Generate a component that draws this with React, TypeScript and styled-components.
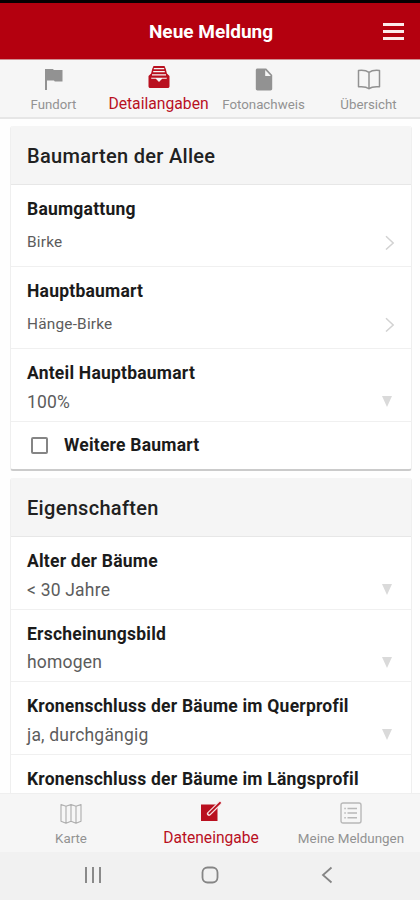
import React from "react";
import styled, { createGlobalStyle } from "styled-components";

const Global = createGlobalStyle`
  * { box-sizing: border-box; }
  body { margin: 0; background: #fefefe; font-family: Roboto, "Liberation Sans", sans-serif; }
`;

const Screen = styled.div`
  width: 420px;
  height: 900px;
  overflow: hidden;
  display: flex;
  flex-direction: column;
  background: #fefefe;
`;

const AppBar = styled.header`
  flex: none;
  height: 60px;
  border-top: 3px solid #080002;
  border-bottom: 1px solid #cf8f92;
  background: #b4000f;
  display: grid;
  grid-template-columns: 1fr auto 1fr;
  align-items: center;
  padding: 1px 16px 0 18px;
`;

const AppTitle = styled.h1`
  margin: 0;
  color: #fff;
  font-size: 19px;
  line-height: 24px;
  font-weight: 700;
`;

const MenuButton = styled.button`
  justify-self: end;
  border: 0;
  padding: 0;
  background: none;
  display: flex;
  flex-direction: column;
  gap: 4px;
`;

const MenuLine = styled.span`
  width: 21px;
  height: 3px;
  background: #fce9ea;
`;

const TabBar = styled.nav`
  flex: none;
  height: 59px;
  display: grid;
  grid-template-columns: repeat(4, 105px);
  padding-left: 1px;
  background: #f6f6f6;
  border-bottom: 2px solid #e6e6e6;
`;

const BottomBar = styled.nav`
  flex: none;
  height: 59px;
  display: grid;
  grid-template-columns: repeat(3, 140px);
  padding-left: 1px;
  background: #f6f6f6;
  border-top: 1px solid #efefef;
`;

const Tab = styled.div<{ $active?: boolean; $top: number }>`
  display: flex;
  flex-direction: column;
  align-items: center;
  padding-top: ${(p) => p.$top}px;
  color: ${(p) => (p.$active ? "#b9101f" : "#929292")};
  svg { display: block; flex: none; }
`;

const TabLabel = styled.span<{ $size: number; $gap: number }>`
  margin-top: ${(p) => p.$gap}px;
  font-size: ${(p) => p.$size}px;
  line-height: 18px;
  white-space: nowrap;
`;

const Content = styled.main`
  flex: 1;
  min-height: 0;
  overflow: hidden;
  display: flex;
  flex-direction: column;
  gap: 7px;
  padding: 7px 8px 0 10px;
`;

const Card = styled.section<{ $open?: boolean }>`
  flex: none;
  border-radius: 3px;
  border-left: 1px solid #efefef;
  border-right: 1px solid #efefef;
  border-bottom: ${(p) => (p.$open ? "0" : "2px solid #cbcbcb")};
  background: #fff;
  overflow: hidden;
`;

const CardHeader = styled.h2`
  margin: 0;
  height: 59px;
  display: flex;
  align-items: center;
  padding: 1px 16px 0;
  background: #f5f5f5;
  border-bottom: 1px solid #e7e7e7;
  color: #212121;
  font-size: 20px;
  font-weight: 500;
  letter-spacing: 0.3px;
`;

const Row = styled.div<{ $height: number }>`
  height: ${(p) => p.$height}px;
  border-bottom: 1px solid #f0f0f0;
  padding: 13px 16px 0;
  &:last-child { border-bottom: 0; }
`;

const RowTitle = styled.div`
  font-size: 17.5px;
  line-height: 22px;
  font-weight: 700;
  letter-spacing: 0.22px;
  color: #1b1b1b;
  white-space: nowrap;
`;

const ValueLine = styled.div<{ $link?: boolean }>`
  display: flex;
  align-items: center;
  justify-content: space-between;
  margin-top: ${(p) => (p.$link ? 11 : 6.5)}px;
  height: 22px;
  font-size: ${(p) => (p.$link ? 15.4 : 17.5)}px;
  letter-spacing: 0.2px;
  color: #5c5c5c;
`;

const CheckRow = styled.label`
  height: 47px;
  display: flex;
  align-items: center;
  gap: 16px;
  padding: 0 20px 1px;
`;

const CheckBox = styled.span`
  width: 17px;
  height: 17px;
  border: 2px solid #858585;
  border-radius: 2px;
`;

const SystemBar = styled.footer`
  flex: none;
  height: 48px;
  background: #f1f1f1;
  display: grid;
  grid-template-columns: 117px 117px 118px;
  justify-content: center;
  justify-items: center;
  align-items: center;
  padding: 0 0 2px;
`;

const Arrow = styled.svg`
  margin-right: 3px;
`;

const ChevronIcon = () => (
  <svg width="10" height="15" viewBox="0 0 10 15" fill="none" stroke="#d2d2d2" strokeWidth="1.5">
    <path d="M1 1.2 8.2 8 1 14.5" />
  </svg>
);

const ArrowIcon = () => (
  <Arrow width="10" height="11" viewBox="0 0 10 11">
    <path fill="#dadada" d="M0 0h10L5 11z" />
  </Arrow>
);

const FlagIcon = () => (
  <svg width="20" height="22" viewBox="0 0 20 22" fill="currentColor">
    <path d="M1 1h8l.8 1h8.700v11.500h-7.700l-.8-1H3V22H1z" />
  </svg>
);

const TrayIcon = () => (
  <svg width="24" height="24" viewBox="0 0 24 24">
    <path fill="currentColor" d="M6.500 1h11l1.300 3 1.100 4.500 2.600 2.500v10.200c0 1-.7 1.800-1.800 1.800H3.300c-1 0-1.800-.8-1.800-1.800V11l2.600-2.500L5.200 4z" />
    <path stroke="#f6f6f6" strokeWidth="1.300" fill="none" d="M6.800 3.600h10.400M6.200 6.700h11.600M5 9.800h14" />
    <path fill="#f6f6f6" d="M4 12.800h16l-.4 1h-4.400L12 17l-3.200-3.200H4.400z" />
  </svg>
);

const FileIcon = () => (
  <svg width="18" height="23" viewBox="0 0 18 23">
    <path fill="currentColor" d="M2.500.5h8.700l6 6.400v13.900c0 1-.7 1.700-1.700 1.700h-13c-1 0-1.700-.7-1.700-1.700V2.200C.8 1.200 1.500.5 2.500.5z" />
    <path fill="#f6f6f6" d="M10.200 2v6h5.700z" />
  </svg>
);

const BookIcon = () => (
  <svg width="24" height="21" viewBox="0 0 24 21" fill="none" stroke="currentColor" strokeWidth="1.500" strokeLinejoin="round">
    <path d="M12 3.300C9.500 1.500 5.500 1.100 1.500 1.500v16.300c4-.4 8-.1 10.500 2 2.500-2.100 6.500-2.400 10.500-2V1.500C18.500 1.100 14.500 1.500 12 3.300zM12 3.300v16.300" />
  </svg>
);

const MapIcon = () => (
  <svg width="22" height="21" viewBox="0 0 22 21" fill="none" stroke="#adadad" strokeWidth="1.100" strokeLinejoin="round">
    <path d="m1 1.500 5 1.700 5-1.700 5 1.700 5-1.700v16.700l-5 2-5-2-5 2-5-2zM6 3.200v17M11 1.500v16.700M16 3.200v17" />
  </svg>
);

const EditIcon = () => (
  <svg width="22" height="21" viewBox="0 0 22 21">
    <path fill="currentColor" d="M1 3.500h16.500V20H1z" />
    <path stroke="#f6e3e4" strokeWidth="4.200" strokeLinecap="round" d="M9 12.700 19.700 2.200" />
    <path stroke="currentColor" strokeWidth="1.900" strokeLinecap="round" d="M9.300 12.400 20 1.800" />
  </svg>
);

const ListIcon = () => (
  <svg width="22" height="22" viewBox="0 0 22 22" fill="none" stroke="#b8b8b8" strokeWidth="1.400">
    <rect x="1" y="1" width="20" height="20" rx="2" />
    <path d="M7.500 6.500h9.500M7.500 11h9.500M7.500 15.700h9.500M4.300 6.500h1.500M4.300 11h1.500M4.300 15.700h1.500" />
  </svg>
);

interface FieldProps {
  title: string;
  value?: string;
  height: number;
  link?: boolean;
}

const Field = ({ title, value, height, link }: FieldProps) => (
  <Row $height={height}>
    <RowTitle>{title}</RowTitle>
    {value && (
      <ValueLine $link={link}>
        <span>{value}</span>
        {link ? <ChevronIcon /> : <ArrowIcon />}
      </ValueLine>
    )}
  </Row>
);

export default function App() {
  return (
    <Screen>
      <Global />
      <AppBar>
        <span />
        <AppTitle>Neue Meldung</AppTitle>
        <MenuButton aria-label="Menü"><MenuLine /><MenuLine /><MenuLine /></MenuButton>
      </AppBar>
      <TabBar>
        <Tab $top={8}><FlagIcon /><TabLabel $size={13.2} $gap={6}>Fundort</TabLabel></Tab>
        <Tab $top={5} $active><TrayIcon /><TabLabel $size={15.7} $gap={6}>Detailangaben</TabLabel></Tab>
        <Tab $top={8}><FileIcon /><TabLabel $size={13.3} $gap={5}>Fotonachweis</TabLabel></Tab>
        <Tab $top={9}><BookIcon /><TabLabel $size={13.3} $gap={6}>Übersicht</TabLabel></Tab>
      </TabBar>
      <Content>
        <Card>
          <CardHeader>Baumarten der Allee</CardHeader>
          <Field title="Baumgattung" value="Birke" height={82} link />
          <Field title="Hauptbaumart" value="Hänge-Birke" height={82} link />
          <Field title="Anteil Hauptbaumart" value="100%" height={73} />
          <CheckRow><CheckBox /><RowTitle>Weitere Baumart</RowTitle></CheckRow>
        </Card>
        <Card $open>
          <CardHeader>Eigenschaften</CardHeader>
          <Field title="Alter der Bäume" value="< 30 Jahre" height={72.6} />
          <Field title="Erscheinungsbild" value="homogen" height={72.6} />
          <Field title="Kronenschluss der Bäume im Querprofil" value="ja, durchgängig" height={72.6} />
          <Field title="Kronenschluss der Bäume im Längsprofil" height={72.6} />
        </Card>
      </Content>
      <BottomBar>
        <Tab $top={9}><MapIcon /><TabLabel $size={13.3} $gap={6}>Karte</TabLabel></Tab>
        <Tab $top={7} $active><EditIcon /><TabLabel $size={15.6} $gap={7}>Dateneingabe</TabLabel></Tab>
        <Tab $top={8}><ListIcon /><TabLabel $size={13.4} $gap={6}>Meine Meldungen</TabLabel></Tab>
      </BottomBar>
      <SystemBar>
        <svg width="18" height="18" viewBox="0 0 18 18" stroke="#8a8a8a" strokeWidth="2"><path d="M2 1v16M9 1v16M16 1v16" /></svg>
        <svg width="18" height="18" viewBox="0 0 18 18" fill="none" stroke="#858585" strokeWidth="1.8"><rect x="1.5" y="1.5" width="15" height="15" rx="5" /></svg>
        <svg width="12" height="18" viewBox="0 0 12 18" fill="none" stroke="#858585" strokeWidth="1.8"><path d="M10.5 1.5 2 9l8.5 7.5" /></svg>
      </SystemBar>
    </Screen>
  );
}
